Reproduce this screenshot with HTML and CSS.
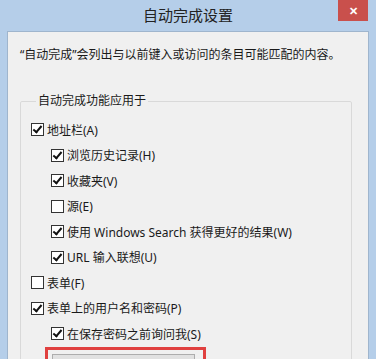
FILE: index.html
```html
<!DOCTYPE html>
<html lang="zh-CN">
<head>
    <meta charset="UTF-8">
    <meta name="viewport" content="width=device-width, initial-scale=1.0">
    <title>自动完成设置</title>
    <link rel="stylesheet" href="styles.css">
</head>
<body>

    <div class="window">
        <div class="titlebar">
            <span class="title">自动完成设置</span>
            <span class="close">&#x2715;</span>
        </div>

        <div class="panel">
            <p class="intro">“自动完成”会列出与以前键入或访问的条目可能匹配的内容。</p>

            <fieldset class="group">
                <legend>自动完成功能应用于</legend>

                <div class="row"><span class="box on"></span>地址栏(A)</div>
                <div class="row sub"><span class="box on"></span>浏览历史记录(H)</div>
                <div class="row sub"><span class="box on"></span>收藏夹(V)</div>
                <div class="row sub"><span class="box"></span>源(E)</div>
                <div class="row sub"><span class="box on"></span>使用 Windows Search 获得更好的结果(W)</div>
                <div class="row sub"><span class="box on"></span>URL 输入联想(U)</div>
                <div class="row"><span class="box"></span>表单(F)</div>
                <div class="row"><span class="box on"></span>表单上的用户名和密码(P)</div>
                <div class="row sub"><span class="box on"></span>在保存密码之前询问我(S)</div>

                <div class="highlight">
                    <button class="btn">管理密码(M)</button>
                </div>
            </fieldset>
        </div>
    </div>

</body>
</html>
```

FILE: styles.css
```css
body {
    margin: 0;
    background-color: #ffffff;
    font-family: "Noto Sans", "Noto Sans CJK SC", sans-serif;
    font-size: 12px;
    color: #1a1a1a;
}

.window {
    position: relative;
    width: 376px;
    height: 359px;
    background-color: #b5cee9;
    overflow: hidden;
}

.titlebar {
    height: 31px;
    display: flex;
    align-items: center;
    justify-content: center;
}

.title {
    font-size: 15px;
    color: #222;
    margin-top: -2px;
}

.close {
    position: absolute;
    top: 0;
    right: 8px;
    width: 30px;
    height: 21px;
    background-color: #c9504c;
    color: #fff;
    font-size: 11px;
    font-weight: bold;
    display: flex;
    align-items: center;
    justify-content: center;
}

.panel {
    margin: 0 7px;
    height: 330px;
    background-color: #f0f0f0;
    border: 1px solid #9fb5cd;
    border-bottom: none;
    padding: 15px 0 0 12px;
}

.intro {
    margin: 0;
    line-height: 16px;
}

.group {
    margin: 30px 0 0 0;
    width: 332px;
    box-sizing: border-box;
    height: 300px;
    border: 1px solid #d9d9d9;
    border-radius: 2px;
    padding: 8px 0 0 10px;
}

.group legend {
    padding: 0 2px;
    margin-left: 5px;
    line-height: 16px;
}

.row {
    display: flex;
    align-items: center;
    height: 25.5px;
    white-space: nowrap;
}

.row.sub {
    padding-left: 20px;
}

.box {
    width: 11px;
    height: 11px;
    border: 1px solid #333;
    background-color: #fff;
    margin-right: 3px;
    flex-shrink: 0;
    position: relative;
}

.box.on::after {
    content: "";
    position: absolute;
    left: 3px;
    top: 0px;
    width: 3px;
    height: 7px;
    border-right: 2px solid #111;
    border-bottom: 2px solid #111;
    transform: rotate(40deg);
}

.highlight {
    width: 149px;
    height: 20px;
    margin-left: 14px;
    border: 3px solid #e0403f;
    border-bottom: none;
    padding: 4px 2px 0 4px;
}

.btn {
    width: 143px;
    height: 22px;
    border: 1px solid #adadad;
    background-color: #e1e1e1;
    font-family: inherit;
    font-size: 12px;
    color: #1a1a1a;
    padding: 2px 0 0 0;
}
```
